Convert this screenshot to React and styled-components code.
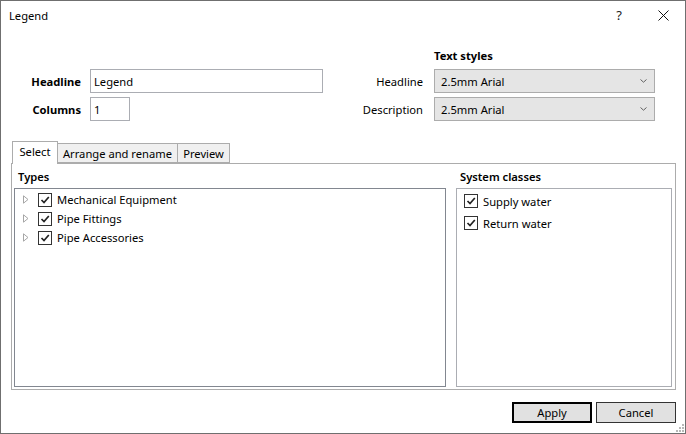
import React from 'react';
import styled, { createGlobalStyle } from 'styled-components';

const GlobalStyle = createGlobalStyle`
  html, body {
    margin: 0;
    padding: 0;
    background: #fff;
  }
  body {
    font-family: "Noto Sans", "Liberation Sans", sans-serif;
    font-size: 11.2px;
    color: #000;
  }
  * {
    box-sizing: border-box;
  }
`;

const Window = styled.div`
  position: relative;
  width: 686px;
  height: 434px;
  border: 1px solid #6f6f6f;
  background: #fff;
  display: flex;
  flex-direction: column;
`;

const TitleBar = styled.div`
  height: 30px;
  display: flex;
  align-items: center;
  padding: 0 0 2px 8px;
`;

const Title = styled.div`
  flex: 1;
`;

const CaptionButton = styled.div`
  width: 44px;
  height: 28px;
  display: flex;
  align-items: center;
  justify-content: center;
  font-size: 13px;
  color: #222;
`;

const FormArea = styled.div`
  display: grid;
  grid-template-columns: 89px 233px 111px 221px;
  grid-template-rows: 20px 24px 24px;
  row-gap: 4px;
  padding-top: 14px;
  align-items: center;
`;

const GroupTitle = styled.div`
  grid-column: 4;
  font-weight: 700;
`;

const Label = styled.div`
  text-align: right;
  padding-right: ${p => (p.right ? 11 : 9)}px;
  font-weight: ${p => (p.bold ? 700 : 400)};
`;

const TextBox = styled.div`
  height: 24px;
  width: ${p => p.width || '233px'};
  border: 1px solid #abadb3;
  padding: 0 3px;
  display: flex;
  align-items: center;
`;

const ComboBox = styled.div`
  height: 24px;
  border: 1px solid #acacac;
  background: #e5e5e5;
  padding: 0 7px 0 6px;
  display: flex;
  align-items: center;
  justify-content: space-between;
`;

const TabStrip = styled.div`
  margin: 20px 0 0 10px;
  height: 22px;
  display: flex;
  align-items: flex-end;
  padding-left: 1px;
  position: relative;
  z-index: 1;
`;

const Tab = styled.div`
  width: ${p => p.w}px;
  height: ${p => (p.active ? 23 : 20)}px;
  margin-bottom: ${p => (p.active ? -1 : 0)}px;
  margin-left: ${p => (p.first ? 0 : -1)}px;
  border: 1px solid #acacac;
  border-bottom: ${p => (p.active ? 'none' : '1px solid #acacac')};
  background: ${p => (p.active ? '#fff' : '#f0f0f0')};
  display: flex;
  align-items: ${p => (p.active ? 'flex-start' : 'center')};
  padding-top: ${p => (p.active ? 2 : 0)}px;
  justify-content: center;
  white-space: nowrap;
`;

const TabPanel = styled.div`
  flex: 1;
  margin: 0 9px 0 10px;
  border: 1px solid #acacac;
  display: grid;
  grid-template-columns: 432px 216px;
  column-gap: 10px;
  padding: 0 3px 2px 2px;
`;

const Column = styled.div`
  display: flex;
  flex-direction: column;
`;

const ColumnHeader = styled.div`
  height: 24px;
  display: flex;
  align-items: center;
  padding-left: 4px;
  font-weight: 600;
`;

const ListBox = styled.div`
  flex: 1;
  border: 1px solid ${p => p.border};
  padding-top: 1px;
`;

const TreeRow = styled.div`
  height: 19px;
  display: flex;
  align-items: center;
  padding-left: 8px;
`;

const Expander = styled.div`
  width: 15px;
  display: flex;
  align-items: center;
`;

const ListRow = styled.div`
  height: 22px;
  display: flex;
  align-items: center;
  padding-left: 7px;
`;

const CheckBox = styled.div`
  width: 14px;
  height: 14px;
  border: 1px solid #333;
  background: #fff;
  display: flex;
  align-items: center;
  justify-content: center;
  flex: none;
`;

const ItemText = styled.span`
  margin-left: ${p => p.gap}px;
`;

const Footer = styled.div`
  display: flex;
  justify-content: flex-end;
  gap: 4px;
  padding: 12px 9px 10px;
`;

const Button = styled.div`
  width: 80px;
  height: 21px;
  background: #e1e1e1;
  border: ${p => (p.primary ? '2px solid #000' : '1px solid #333')};
  display: flex;
  align-items: center;
  justify-content: center;
`;

const Grip = styled.svg`
  position: absolute;
  right: 1px;
  bottom: 1px;
`;

const Check = () => (
  <svg width="10" height="10" viewBox="0 0 10 10">
    <path d="M1.5 5 L4 7.5 L8.8 2" fill="none" stroke="#222" strokeWidth="1.7" />
  </svg>
);

const Arrow = () => (
  <svg width="6" height="9" viewBox="0 0 6 9">
    <path d="M0.5 0.8 L5 4.5 L0.5 8.2 Z" fill="none" stroke="#a6a6a6" strokeWidth="1" />
  </svg>
);

const Chevron = () => (
  <svg width="7" height="4" viewBox="0 0 7 4">
    <path d="M0.5 0.5 L3.5 3.2 L6.5 0.5" fill="none" stroke="#606060" strokeWidth="1" />
  </svg>
);

const types = ['Mechanical Equipment', 'Pipe Fittings', 'Pipe Accessories'];
const systemClasses = ['Supply water', 'Return water'];

export default function App() {
  return (
    <>
      <GlobalStyle />
      <Window>
        <TitleBar>
          <Title>Legend</Title>
          <CaptionButton>?</CaptionButton>
          <CaptionButton>
            <svg width="11" height="11" viewBox="0 0 11 11">
              <path d="M0.5 0.5 L10.5 10.5 M10.5 0.5 L0.5 10.5" stroke="#111" strokeWidth="1" />
            </svg>
          </CaptionButton>
        </TitleBar>

        <FormArea>
          <GroupTitle>Text styles</GroupTitle>

          <Label bold>Headline</Label>
          <TextBox>Legend</TextBox>
          <Label right>Headline</Label>
          <ComboBox>
            2.5mm Arial
            <Chevron />
          </ComboBox>

          <Label bold>Columns</Label>
          <TextBox width="40px">1</TextBox>
          <Label right>Description</Label>
          <ComboBox>
            2.5mm Arial
            <Chevron />
          </ComboBox>
        </FormArea>

        <TabStrip>
          <Tab active first w={46}>Select</Tab>
          <Tab w={121}>Arrange and rename</Tab>
          <Tab w={53}>Preview</Tab>
        </TabStrip>
        <TabPanel>
          <Column>
            <ColumnHeader>Types</ColumnHeader>
            <ListBox border="#828790">
              {types.map(t => (
                <TreeRow key={t}>
                  <Expander>
                    <Arrow />
                  </Expander>
                  <CheckBox>
                    <Check />
                  </CheckBox>
                  <ItemText gap={5}>{t}</ItemText>
                </TreeRow>
              ))}
            </ListBox>
          </Column>
          <Column>
            <ColumnHeader>System classes</ColumnHeader>
            <ListBox border="#abadb3">
              {systemClasses.map(s => (
                <ListRow key={s}>
                  <CheckBox>
                    <Check />
                  </CheckBox>
                  <ItemText gap={5}>{s}</ItemText>
                </ListRow>
              ))}
            </ListBox>
          </Column>
        </TabPanel>

        <Footer>
          <Button primary>Apply</Button>
          <Button>Cancel</Button>
        </Footer>

        <Grip width="8" height="8" viewBox="0 0 8 8">
          {[[6, 0], [6, 3], [3, 3], [6, 6], [3, 6], [0, 6]].map(([x, y]) => (
            <rect key={`${x}-${y}`} x={x} y={y} width="2" height="2" fill="#b8b8b8" />
          ))}
        </Grip>
      </Window>
    </>
  );
}
